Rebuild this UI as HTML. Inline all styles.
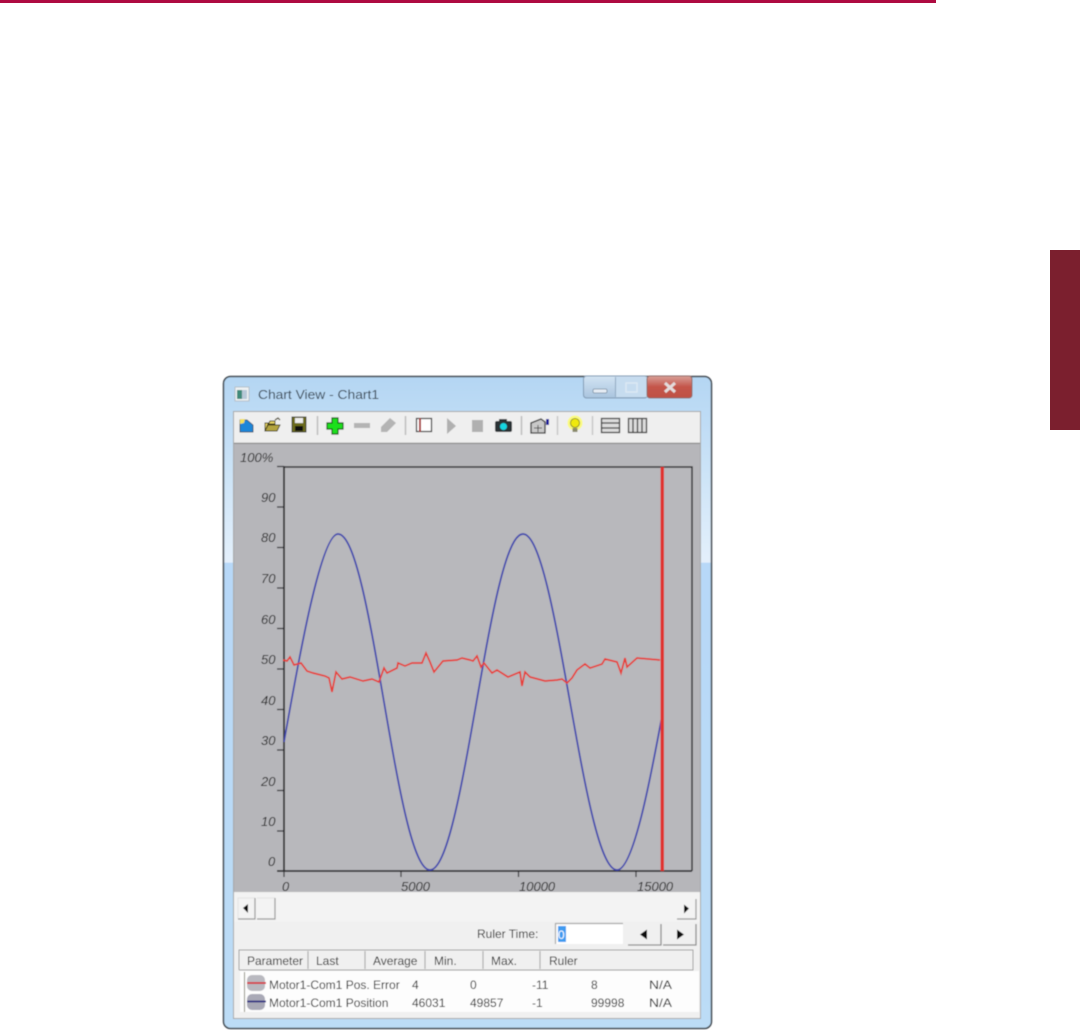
<!DOCTYPE html>
<html>
<head>
<meta charset="utf-8">
<style>
html,body{margin:0;padding:0;width:1080px;height:1030px;overflow:hidden;background:#fff}
svg{position:absolute;left:0;top:0}
text{font-family:"Liberation Sans",sans-serif;fill:#222}
</style>
</head>
<body>
<svg width="1080" height="1030" viewBox="0 0 1080 1030">
<defs>
<linearGradient id="glass" x1="0" y1="0" x2="0" y2="1">
<stop offset="0" stop-color="#b4d6f3"/><stop offset="0.1" stop-color="#c4dff6"/>
<stop offset="0.285" stop-color="#e4f0fb"/><stop offset="0.286" stop-color="#b7d8f8"/>
<stop offset="1" stop-color="#bcdcf6"/>
</linearGradient>
<linearGradient id="close" x1="0" y1="0" x2="0" y2="1"><stop offset="0" stop-color="#d9a098"/><stop offset="0.5" stop-color="#c4554a"/><stop offset="1" stop-color="#bf5044"/></linearGradient>
<linearGradient id="capt" x1="0" y1="0" x2="0" y2="1"><stop offset="0" stop-color="#d3e4f3"/><stop offset="1" stop-color="#a9c4de"/></linearGradient>
<filter id="b" x="-2%" y="-2%" width="104%" height="104%"><feGaussianBlur stdDeviation="0.55"/></filter>
</defs>

<rect x="0" y="0" width="936" height="3" fill="#ae0b41"/>
<rect x="1050" y="250" width="30" height="180" fill="#7b1f2e"/>

<g filter="url(#b)">
<rect x="223.500" y="376.500" width="488" height="652" rx="7" fill="url(#glass)" stroke="#3f474e" stroke-width="1.500"/>
<!-- title -->
<rect x="235" y="387" width="14" height="14" fill="#eef2f4" stroke="#b5c0c8"/>
<rect x="237" y="390" width="5" height="9" fill="#3f8a7a"/><rect x="242" y="390" width="5" height="9" fill="#b8c8d8"/>
<text x="258" y="399" font-size="13" textLength="121" lengthAdjust="spacingAndGlyphs" style="fill:#34424f">Chart View - Chart1</text>
<!-- caption buttons -->
<rect x="583.500" y="376" width="64" height="22" rx="3" fill="url(#capt)" stroke="#8099b2"/>
<rect x="616" y="377" width="31" height="20" fill="#c6dcef"/>
<line x1="615.500" y1="377" x2="615.500" y2="397" stroke="#8fa8c0"/>
<rect x="647" y="376" width="45" height="22" rx="3" fill="url(#close)" stroke="#8f6a68"/>
<rect x="593" y="389" width="14" height="4" rx="1.500" fill="#e6edf4" stroke="#7b8ea2" stroke-width="0.800"/>
<rect x="626" y="383" width="11" height="9" fill="none" stroke="#dbe8f3" stroke-width="1.500"/>
<path d="M665 383L675 392M675 383L665 392" stroke="#e4dcdc" stroke-width="3"/>

<!-- client frame -->
<rect x="233.500" y="411.500" width="467" height="607" fill="#f0f0f0" stroke="#a7a7a7"/>
<rect x="234" y="412" width="466" height="31" fill="#efefef"/>
<line x1="234" y1="443.500" x2="700" y2="443.500" stroke="#8c8c8c" stroke-width="1.500"/>

<!-- toolbar icons -->
<path d="M240 420h7l6 5v7h-13z" fill="#1f86d8" stroke="#263b4f" stroke-width="0.800"/>
<path d="M240 419l5 0-1 4-4 1z" fill="#f3e05a"/>
<path d="M265 431v-8h4l1-2h5v3h-7l-3 7z" fill="#e6d466" stroke="#3e3a18" stroke-width="0.900"/>
<path d="M265 431l3-6h12l-3 6z" fill="#b3a440" stroke="#3e3a18" stroke-width="0.900"/>
<path d="M275 420l3-2 2 2" fill="none" stroke="#3e3a18" stroke-width="1.200"/>
<rect x="292" y="417" width="14" height="15" fill="#6a6a1e" stroke="#222" stroke-width="0.800"/>
<rect x="295" y="418" width="8" height="5" fill="#eee"/><rect x="295" y="426" width="8" height="5" fill="#111"/>
<line x1="317.500" y1="416" x2="317.500" y2="435" stroke="#bdbdbd" stroke-width="1.500"/>
<path d="M332 418h6v5h5v6h-5v5h-6v-5h-5v-6h5z" fill="#1ee01e" stroke="#0b5a0b" stroke-width="1.200"/>
<rect x="354" y="423" width="16" height="5" fill="#b4b4b4"/>
<path d="M381 432l0-5 9-9 6 5-9 9z" fill="#b4b4b4"/>
<line x1="405.500" y1="416" x2="405.500" y2="435" stroke="#bdbdbd" stroke-width="1.500"/>
<rect x="416.500" y="418.500" width="15" height="13" fill="#fff" stroke="#222" stroke-width="1.200"/>
<line x1="420" y1="418" x2="420" y2="432" stroke="#a01818" stroke-width="1.800"/>
<path d="M447 418l9 8-9 8z" fill="#b0b0b0"/>
<rect x="472" y="420" width="11" height="12" fill="#b0b0b0"/>
<rect x="495" y="421" width="17" height="11" rx="2" fill="#2b3034"/><rect x="499" y="419" width="8" height="3" fill="#2b3034"/>
<circle cx="503.500" cy="426.500" r="3.500" fill="#19d4e0"/>
<line x1="521.500" y1="416" x2="521.500" y2="435" stroke="#bdbdbd" stroke-width="1.500"/>
<path d="M531 423l10-4 4 3v11h-14z" fill="#c9c9c9" stroke="#333" stroke-width="1.300"/>
<path d="M534 428h8M538 425v7" stroke="#333" stroke-width="0.800"/>
<rect x="546" y="419" width="3" height="6" fill="#1d1d9a"/>
<line x1="557.500" y1="416" x2="557.500" y2="435" stroke="#c8c8c8" stroke-width="1.500"/>
<circle cx="575" cy="423" r="7.500" fill="#fafa80"/>
<circle cx="575" cy="423" r="4.500" fill="#efe90a" stroke="#77761a" stroke-width="0.800"/>
<rect x="572.500" y="428" width="5" height="4" fill="#8a8a6a"/>
<line x1="592.500" y1="416" x2="592.500" y2="435" stroke="#c8c8c8" stroke-width="1.500"/>
<rect x="601.500" y="418.500" width="18" height="14" fill="#ddd" stroke="#3a3a3a" stroke-width="1.300"/>
<path d="M602 423h17M602 428h17" stroke="#3a3a3a" stroke-width="1.300"/>
<rect x="628.500" y="418.500" width="18" height="14" fill="#ddd" stroke="#3a3a3a" stroke-width="1.300"/>
<path d="M633 419v13M637.500 419v13M642 419v13" stroke="#3a3a3a" stroke-width="1.300"/>

<!-- chart -->
<rect x="234" y="444" width="466" height="448" fill="#b6b6ba"/>
<rect x="284" y="467" width="408" height="404" fill="#b8b8bc"/>
<path d="M284 467H692V871" fill="none" stroke="#2e2e30" stroke-width="1.500"/>
<path d="M284 466V872M277 871H692" fill="none" stroke="#2e2e30" stroke-width="1.800"/>
<path d="M277 466.500h7M277 507h7M277 547.500h7M277 588h7M277 628.500h7M277 669h7M277 709.500h7M277 750h7M277 790.500h7M277 831h7" stroke="#2e2e30" stroke-width="1.200"/>
<path d="M401 871v6M518.500 871v6M636 871v6M284 871v6" stroke="#2e2e30" stroke-width="1.200"/>
<g font-size="13" font-style="italic">
<text x="240" y="462">100%</text>
<text x="261" y="502">90</text><text x="261" y="542">80</text><text x="261" y="583">70</text>
<text x="261" y="624">60</text><text x="261" y="664">50</text><text x="261" y="705">40</text>
<text x="261" y="745">30</text><text x="261" y="786">20</text><text x="261" y="826">10</text>
<text x="268" y="866">0</text>
<text x="282" y="891">0</text><text x="401" y="891">5000</text><text x="519" y="891">10000</text><text x="637" y="891">15000</text>
</g>
<path d="M284 742C296 675 320 534 338 534C372 534 396 870 430 870C464 870 489 534 523 534C557 534 583 870 617 870C634 870 652 770 662 716" fill="none" stroke="#3f47ad" stroke-width="1.700"/>
<polyline fill="none" stroke="#e63e38" stroke-width="1.700" points="283,660 287,661 290,657 294,665 301,663 307,671 313,673 325,676 329,678 332,692 336,672 342,679 350,677 363,681 372,679 379,682 384,668 387,673 397,668 398,663 405,666 412,663 422,663 426,653 430,662 434,672 443,661 457,660 462,658 470,660 473,661 477,656 481,667 484,663 492,673 497,670 508,677 520,672 522,686 525,672 530,677 545,681 557,680 562,679 567,683 572,678 577,670 585,664 590,668 602,664 605,659 617,662 621,673 625,658 627,667 637,658 660,660"/>
<rect x="660.500" y="467" width="3.500" height="404" fill="#e0302e"/>

<!-- scrollbar -->
<rect x="234" y="893" width="466" height="29" fill="#f3f3f3"/>
<path d="M238 919V898H255M257 898H275" fill="none" stroke="#e4e4e4"/>
<path d="M238 919H255V898M257 919H275V898M677 919H696V899" fill="none" stroke="#9a9a9a" stroke-width="1.200"/>
<path d="M243 908l5-4v9z" fill="#111"/>
<path d="M689 908.500l-5-4v9z" fill="#111"/>

<!-- ruler -->
<text x="477" y="938" font-size="12">Ruler Time:</text>
<rect x="556" y="924" width="67" height="20" fill="#fff"/>
<path d="M555.500 944V923.500H623" fill="none" stroke="#a8a8a8" stroke-width="1.200"/>
<rect x="558" y="926" width="8" height="16" fill="#3f9bf0"/>
<text x="558" y="939" font-size="12" style="fill:#fff">0</text>
<path d="M628 945H661V924M663 945H696V924" fill="none" stroke="#8f8f8f" stroke-width="1.300"/>
<path d="M640 934.500l7-5v10z" fill="#111"/>
<path d="M684 934.500l-7-5v10z" fill="#111"/>

<!-- table -->
<rect x="239" y="950" width="454" height="20" fill="#f0f0f0"/>
<path d="M239 970V950H693V970H239" fill="none" stroke="#a0a0a0"/>
<rect x="240" y="971" width="459" height="41" fill="#fdfdfd"/>
<line x1="244.500" y1="972" x2="244.500" y2="1012" stroke="#8a8a7a"/>
<path d="M308 951v18M365 951v18M425 951v18M483 951v18M540 951v18" stroke="#b0b0b0" stroke-width="1.200"/>
<g font-size="12">
<text x="247" y="965">Parameter</text><text x="316" y="965">Last</text><text x="373" y="965">Average</text>
<text x="434" y="965">Min.</text><text x="491" y="965">Max.</text><text x="549" y="965">Ruler</text>
<text x="269" y="989">Motor1-Com1 Pos. Error</text><text x="412" y="989">4</text><text x="470" y="989">0</text><text x="532" y="989">-11</text><text x="591" y="989">8</text><text x="649" y="989" textLength="23" lengthAdjust="spacingAndGlyphs">N/A</text>
<text x="269" y="1007">Motor1-Com1 Position</text><text x="412" y="1007">46031</text><text x="470" y="1007">49857</text><text x="532" y="1007">-1</text><text x="591" y="1007">99998</text><text x="649" y="1007" textLength="23" lengthAdjust="spacingAndGlyphs">N/A</text>
</g>
<rect x="247" y="975" width="18" height="16" rx="5" fill="#b9b9c0"/>
<rect x="247" y="994" width="18" height="16" rx="5" fill="#a9a9b6"/>
<line x1="247" y1="983" x2="266" y2="983" stroke="#d8303a" stroke-width="1.800"/>
<line x1="247" y1="1001.500" x2="266" y2="1001.500" stroke="#2a2a80" stroke-width="1.800"/>
</g>
</svg>
</body>
</html>
